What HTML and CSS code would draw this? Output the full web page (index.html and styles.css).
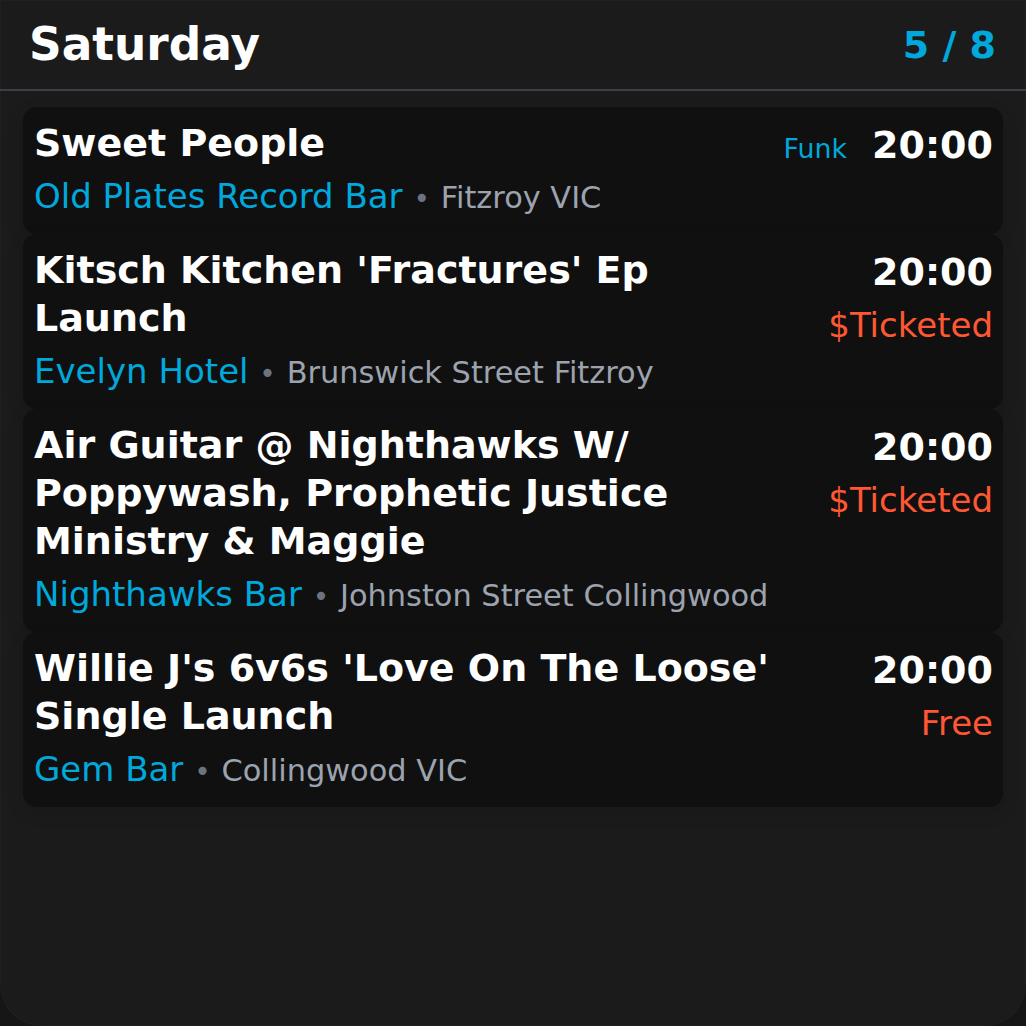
FILE: index.html
```html
<!DOCTYPE html>
<html>
<head>
<meta charset="utf-8">
<link rel="stylesheet" href="styles.css">
</head>
<body>
<div class="app">
  <header class="header">
    <h1 class="day">Saturday</h1>
    <div class="count">5 / 8</div>
  </header>
  <main class="list">
    <article class="card">
      <div class="info">
        <div class="title">Sweet People</div>
        <div class="place"><span class="venue">Old Plates Record Bar</span> <span class="dot">•</span> <span class="loc">Fitzroy VIC</span></div>
      </div>
      <div class="meta">
        <div class="timerow"><span class="genre">Funk</span><span class="time">20:00</span></div>
      </div>
    </article>
    <article class="card">
      <div class="info">
        <div class="title">Kitsch Kitchen 'Fractures' Ep Launch</div>
        <div class="place"><span class="venue">Evelyn Hotel</span> <span class="dot">•</span> <span class="loc">Brunswick Street Fitzroy</span></div>
      </div>
      <div class="meta">
        <div class="timerow"><span class="time">20:00</span></div>
        <div class="price">$Ticketed</div>
      </div>
    </article>
    <article class="card">
      <div class="info">
        <div class="title">Air Guitar @ Nighthawks W/ Poppywash, Prophetic Justice Ministry &amp; Maggie</div>
        <div class="place"><span class="venue">Nighthawks Bar</span> <span class="dot">•</span> <span class="loc">Johnston Street Collingwood</span></div>
      </div>
      <div class="meta">
        <div class="timerow"><span class="time">20:00</span></div>
        <div class="price">$Ticketed</div>
      </div>
    </article>
    <article class="card">
      <div class="info">
        <div class="title">Willie J's 6v6s 'Love On The Loose' Single Launch</div>
        <div class="place"><span class="venue">Gem Bar</span> <span class="dot">•</span> <span class="loc">Collingwood VIC</span></div>
      </div>
      <div class="meta">
        <div class="timerow"><span class="time">20:00</span></div>
        <div class="price">Free</div>
      </div>
    </article>
  </main>
</div>
</body>
</html>
```

FILE: styles.css
```css
* { box-sizing: border-box; }
html, body {
  margin: 0;
  padding: 0;
  background: #161616;
}
body {
  font-family: "DejaVu Sans", sans-serif;
  color: #ffffff;
}
.app {
  width: 1026px;
  height: 1026px;
  background: #1b1b1b;
  border-radius: 0 0 42px 42px;
  box-shadow: inset 0 0 0 1px #202020;
  overflow: hidden;
}
.header {
  height: 91px;
  display: flex;
  align-items: center;
  justify-content: space-between;
  padding: 0 30px 0 29px;
  border-bottom: 2px solid #3a3f4a;
}
.day {
  margin: 0;
  font-size: 45.4px;
  font-weight: bold;
  line-height: 1;
  padding-top: 1px;
}
.count {
  font-size: 38px;
  font-weight: bold;
  color: #00a8dc;
  line-height: 1;
}
.list {
  padding: 16px 23px 0;
  display: flex;
  flex-direction: column;
  gap: 0;
}
.card {
  background: #101010;
  border-radius: 14px;
  padding: 12px 10px 17px 11px;
  display: flex;
  justify-content: space-between;
  gap: 12px;
  box-shadow: 0 6px 18px rgba(0, 0, 0, 0.12);
}
.info {
  flex: 1 1 auto;
  max-width: 745px;
  min-width: 0;
}
.title {
  font-size: 38px;
  font-weight: bold;
  line-height: 48px;
  color: #ffffff;
}
.place {
  margin-top: 8px;
  font-size: 34px;
  line-height: 42px;
  white-space: nowrap;
}
.venue { color: #00a8dc; }
.dot { color: #6b7280; font-size: 28px; line-height: 1; }
.loc { color: #9ca3af; font-size: 30.4px; line-height: 1; }
.meta {
  flex: 0 0 auto;
  display: flex;
  flex-direction: column;
  align-items: flex-end;
  padding-top: 2px;
}
.timerow {
  display: flex;
  align-items: baseline;
  gap: 25px;
  line-height: 48px;
}
.genre {
  font-size: 26.8px;
  color: #00a8dc;
}
.time {
  font-size: 38px;
  font-weight: bold;
  color: #ffffff;
}
.price {
  margin-top: 8px;
  font-size: 34px;
  line-height: 42px;
  color: #ff5733;
}
```
